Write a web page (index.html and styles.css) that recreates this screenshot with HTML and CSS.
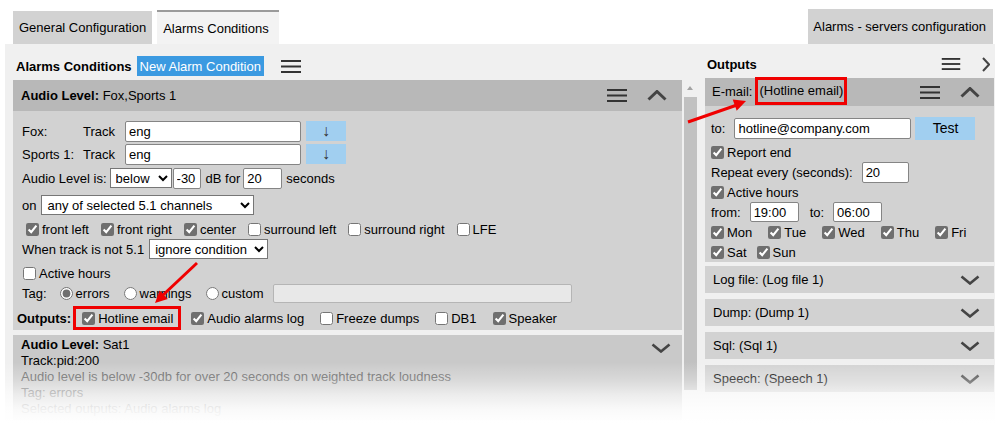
FILE: index.html
```html
<!DOCTYPE html>
<html lang="en">
<head>
  <meta charset="UTF-8">
  <title>Alarms Conditions</title>
  <link rel="stylesheet" href="styles.css">
</head>
<body>
  <div class="page">

    <!-- Tabs -->
    <div class="tabs">
      <div class="tab">General Configuration</div>
      <div class="tab active">Alarms Conditions</div>
      <div class="tab tab-right">Alarms - servers configuration</div>
    </div>

    <div class="panel">

      <!-- Alarms conditions column -->
      <div class="conditions">
        <div class="pane-head">
          <b>Alarms Conditions</b>
          <button class="new-btn">New Alarm Condition</button>
          <svg class="icon-menu" viewBox="0 0 20 13"><rect y="0" width="20" height="2"/><rect y="5.5" width="20" height="2"/><rect y="11" width="20" height="2"/></svg>
        </div>

        <div class="scroll">
          <div class="list">
            <div class="box">
              <div class="box-head">
                <span><b>Audio Level:</b> Fox,Sports 1</span>
                <span class="head-icons">
                  <svg class="icon-menu" viewBox="0 0 20 13"><rect y="0" width="20" height="2"/><rect y="5.5" width="20" height="2"/><rect y="11" width="20" height="2"/></svg>
                  <svg class="icon-up" viewBox="0 0 20 11"><polyline points="1.5,9.5 10,1.5 18.5,9.5"/></svg>
                </span>
              </div>
              <div class="box-body">
                <div class="row mb3">
                  <span class="src">Fox:</span>
                  <span class="trk">Track</span>
                  <input class="in-track" type="text" value="eng">
                  <button class="down-btn">↓</button>
                </div>
                <div class="row mb4">
                  <span class="src">Sports 1:</span>
                  <span class="trk">Track</span>
                  <input class="in-track" type="text" value="eng">
                  <button class="down-btn">↓</button>
                </div>
                <div class="row mb7">
                  <span>Audio Level is:</span>
                  <select class="sel-below"><option>below</option></select>
                  <input class="in-db" type="text" value="-30">
                  <span class="ml5">dB for</span>
                  <input class="in-sec" type="text" value="20">
                  <span class="ml4">seconds</span>
                </div>
                <div class="row mb4">
                  <span>on</span>
                  <select class="sel-on"><option>any of selected 5.1 channels</option></select>
                </div>
                <div class="row checks">
                  <label class="opt"><input type="checkbox" checked>front left</label>
                  <label class="opt"><input type="checkbox" checked>front right</label>
                  <label class="opt"><input type="checkbox" checked>center</label>
                  <label class="opt"><input type="checkbox">surround left</label>
                  <label class="opt"><input type="checkbox">surround right</label>
                  <label class="opt"><input type="checkbox">LFE</label>
                </div>
                <div class="row mb4">
                  <span>When track is not 5.1</span>
                  <select class="sel-when"><option>ignore condition</option></select>
                </div>
                <div class="row">
                  <label class="opt active-hours"><input type="checkbox">Active hours</label>
                </div>
                <div class="row tags mb3">
                  <span>Tag:</span>
                  <label class="opt"><input type="radio" name="tag" checked>errors</label>
                  <label class="opt"><input type="radio" name="tag">warnings</label>
                  <label class="opt"><input type="radio" name="tag">custom</label>
                  <input class="in-tag" type="text" disabled>
                </div>
                <div class="row outs">
                  <b>Outputs:</b>
                  <label class="opt marked"><input type="checkbox" checked>Hotline email</label>
                  <label class="opt"><input type="checkbox" checked>Audio alarms log</label>
                  <label class="opt"><input type="checkbox">Freeze dumps</label>
                  <label class="opt"><input type="checkbox">DB1</label>
                  <label class="opt"><input type="checkbox" checked>Speaker</label>
                </div>
              </div>
            </div>

            <div class="box closed">
              <div class="summary">
                <div><b>Audio Level:</b> Sat1</div>
                <div>Track:pid:200</div>
                <div class="muted">Audio level is below -30db for over 20 seconds on weighted track loudness</div>
                <div class="muted">Tag: errors</div>
                <div class="muted">Selected outputs: Audio alarms log</div>
              </div>
              <svg class="icon-down" viewBox="0 0 20 10"><polyline points="1.5,1.5 10,8.5 18.5,1.5"/></svg>
            </div>
          </div>

          <div class="scrollbar">
            <div class="sb-up"></div>
            <div class="sb-thumb"></div>
          </div>
        </div>
      </div>

      <!-- Outputs column -->
      <div class="outputs">
        <div class="out-head">
          <b>Outputs</b>
          <svg class="icon-menu" viewBox="0 0 20 13"><rect y="0" width="20" height="2"/><rect y="5.5" width="20" height="2"/><rect y="11" width="20" height="2"/></svg>
          <svg class="icon-right" viewBox="0 0 8 15"><polyline points="1,1 7,7.5 1,14"/></svg>
        </div>

        <div class="sec open">
          <div class="sec-head">
            <span>E-mail:<span class="hl">(Hotline email)</span></span>
            <span class="head-icons">
              <svg class="icon-menu" viewBox="0 0 20 13"><rect y="0" width="20" height="2"/><rect y="5.5" width="20" height="2"/><rect y="11" width="20" height="2"/></svg>
              <svg class="icon-up" viewBox="0 0 20 11"><polyline points="1.5,9.5 10,1.5 18.5,9.5"/></svg>
            </span>
          </div>
          <div class="sec-body">
            <div class="row to-row">
              <span>to:</span>
              <input class="in-mail" type="text" value="hotline@company.com">
              <button class="test-btn">Test</button>
            </div>
            <div class="row">
              <label class="opt"><input type="checkbox" checked>Report end</label>
            </div>
            <div class="row">
              <span>Repeat every (seconds):</span>
              <input class="in-repeat" type="text" value="20">
            </div>
            <div class="row">
              <label class="opt"><input type="checkbox" checked>Active hours</label>
            </div>
            <div class="row">
              <span>from:</span>
              <input class="in-time" type="text" value="19:00">
              <span class="to-lbl">to:</span>
              <input class="in-time in-time2" type="text" value="06:00">
            </div>
            <div class="row days">
              <label class="opt"><input type="checkbox" checked>Mon</label>
              <label class="opt"><input type="checkbox" checked>Tue</label>
              <label class="opt"><input type="checkbox" checked>Wed</label>
              <label class="opt"><input type="checkbox" checked>Thu</label>
              <label class="opt"><input type="checkbox" checked>Fri</label>
            </div>
            <div class="row days days2">
              <label class="opt"><input type="checkbox" checked>Sat</label>
              <label class="opt"><input type="checkbox" checked>Sun</label>
            </div>
          </div>
        </div>

        <div class="sec first">
          <div class="sec-head"><span>Log file: (Log file 1)</span><svg class="icon-down" viewBox="0 0 20 10"><polyline points="1.5,1.5 10,8.5 18.5,1.5"/></svg></div>
        </div>
        <div class="sec">
          <div class="sec-head"><span>Dump: (Dump 1)</span><svg class="icon-down" viewBox="0 0 20 10"><polyline points="1.5,1.5 10,8.5 18.5,1.5"/></svg></div>
        </div>
        <div class="sec">
          <div class="sec-head"><span>Sql: (Sql 1)</span><svg class="icon-down" viewBox="0 0 20 10"><polyline points="1.5,1.5 10,8.5 18.5,1.5"/></svg></div>
        </div>
        <div class="sec">
          <div class="sec-head"><span>Speech: (Speech 1)</span><svg class="icon-down" viewBox="0 0 20 10"><polyline points="1.5,1.5 10,8.5 18.5,1.5"/></svg></div>
        </div>
      </div>
    </div>

    <!-- Fade out at the bottom of the screenshot -->
    <div class="fade"></div>

    <!-- Red pointer arrows -->
    <svg class="arrows" viewBox="0 0 1000 434">
      <line x1="197" y1="263" x2="162" y2="296"/>
      <polygon points="155,303 167.8,299 159.6,290.4"/>
      <line x1="688" y1="122" x2="737" y2="105"/>
      <polygon points="746,101 736.7,110.7 732.7,99.5"/>
    </svg>
  </div>
</body>
</html>
```

FILE: styles.css
```css
* {
  box-sizing: border-box;
}

body {
  margin: 0;
  background: #ffffff;
  font-family: 'Liberation Sans', Arial, sans-serif;
  font-size: 13px;
  color: #000;
}

.page {
  position: relative;
  width: 1000px;
  height: 434px;
  overflow: hidden;
}

input, select, button {
  font-family: 'Liberation Sans', Arial, sans-serif;
  font-size: 13px;
  color: #000;
}

input[type="checkbox"],
input[type="radio"] {
  width: 13px;
  height: 13px;
  margin: 0;
  accent-color: #6f6f6f;
}

input[type="text"] {
  height: 21px;
  padding: 0 3px;
  border: 1px solid #858585;
  border-radius: 2px;
  background: #fff;
}

select {
  height: 20px;
  border: 1px solid #767676;
  border-radius: 0;
  background: #fff;
  padding: 0 1px;
}

/* Tabs */
.tabs {
  display: flex;
  align-items: flex-end;
  gap: 5px;
  height: 44px;
  padding-left: 13px;
}

.tab {
  display: flex;
  align-items: center;
  height: 33px;
  padding: 0 6px;
  background: #d2d2d2;
}

.tab.active {
  height: 34px;
  padding: 0 10px 0 6px;
  background: #f3f3f3;
  border-top: 2px solid #9b9b9b;
}

.tab-right {
  margin-left: auto;
  margin-right: 7px;
  height: 35px;
  padding: 0 7px 0 5px;
}

/* Panel */
.panel {
  display: flex;
  margin: 0 5px;
  height: 390px;
  background: #f0f0f0;
}

.conditions {
  width: 692px;
  padding-left: 8px;
}

.pane-head {
  display: flex;
  align-items: center;
  height: 36px;
  padding: 8px 0 0 3px;
}

.new-btn {
  height: 20px;
  margin-left: 5px;
  padding: 0 3px;
  border: none;
  background: #3b9ae1;
  color: #fff;
}

.pane-head .icon-menu {
  margin-left: 17px;
}

.icon-menu {
  width: 20px;
  height: 13px;
  fill: #333;
}

.icon-up {
  width: 20px;
  height: 11px;
  fill: none;
  stroke: #444;
  stroke-width: 3;
}

.icon-down {
  width: 20px;
  height: 10px;
  fill: none;
  stroke: #444;
  stroke-width: 2.6;
}

.icon-right {
  width: 8px;
  height: 15px;
  fill: none;
  stroke: #444;
  stroke-width: 2;
}

.head-icons {
  display: flex;
  align-items: center;
  gap: 20px;
}

.scroll {
  display: flex;
  gap: 2px;
  height: 310px;
}

.list {
  width: 669px;
}

.scrollbar {
  display: flex;
  flex-direction: column;
  width: 13px;
}

.sb-up {
  height: 17px;
  position: relative;
}

.sb-up::after {
  content: '';
  position: absolute;
  left: 3px;
  top: 6px;
  border-left: 3.5px solid transparent;
  border-right: 3.5px solid transparent;
  border-bottom: 4px solid #a3a3a3;
}

.sb-thumb {
  flex: 1;
  background: #c1c1c1;
}

/* Alarm boxes */
.box {
  background: #d2d2d2;
  margin-bottom: 5px;
}

.box-head {
  display: flex;
  align-items: center;
  justify-content: space-between;
  height: 31px;
  padding: 0 15px 0 8px;
  background: #b8b8b8;
}

.box-body {
  padding: 10px 0 0 9px;
}

.row {
  display: flex;
  align-items: center;
  height: 20px;
}

.mb3 { margin-bottom: 3px; }
.mb4 { margin-bottom: 4px; }
.mb7 { margin-bottom: 7px; }
.ml4 { margin-left: 4px; }
.ml5 { margin-left: 5px; }

.src {
  width: 61px;
}

.trk {
  width: 42px;
}

.in-track {
  width: 176px;
}

.down-btn {
  width: 40px;
  height: 20px;
  margin-left: 5px;
  border: none;
  background: #a1cff0;
  color: #333;
  padding: 0;
  font-size: 16px;
  line-height: 20px;
}

.sel-below {
  width: 62px;
  margin-left: 3px;
}

.in-db {
  width: 28px;
  margin-left: 1px;
}

.in-sec {
  width: 39px;
  margin-left: 3px;
}

.sel-on {
  width: 213px;
  margin-left: 5px;
}

.sel-when {
  width: 119px;
  margin-left: 5px;
}

.opt {
  display: flex;
  align-items: center;
  gap: 3px;
}

.checks {
  gap: 12px;
  padding-left: 4px;
}

.active-hours {
  margin-left: 1px;
}

.tags {
  gap: 14px;
}

.tags > span {
  margin-right: -1px;
}

.in-tag {
  width: 299px;
  height: 19px !important;
  margin-left: -4px;
  background: #e8e8e8 !important;
  border-color: #b5b5b5 !important;
}

.outs {
  height: 24px;
  gap: 16px;
  margin-left: -5px;
}

.outs b {
  margin-right: -14px;
}

.marked {
  height: 24px;
  padding: 0 5px 0 6px;
  border: 3px solid #f00000;
  margin-right: -6px;
}

/* Collapsed alarm */
.closed {
  position: relative;
  background: #c9c9c9;
}

.summary {
  padding: 2px 8px 3px;
  line-height: 16px;
}

.muted {
  color: #5e5e5e;
}

.closed .icon-down {
  position: absolute;
  right: 11px;
  top: 8px;
}

/* Outputs column */
.outputs {
  flex: 1;
  padding: 0 1px 0 8px;
}

.out-head {
  display: flex;
  align-items: center;
  height: 34px;
  padding: 6px 4px 0 2px;
}

.out-head b {
  margin-right: auto;
}

.out-head .icon-menu {
  height: 12px;
  margin-right: 21px;
}

.sec {
  background: #d2d2d2;
  margin-top: 6px;
}

.sec.open {
  margin-top: 0;
}

.sec.first {
  margin-top: 4px;
}

.sec-head {
  display: flex;
  align-items: center;
  justify-content: space-between;
  height: 27px;
  padding: 0 14px 0 8px;
}

.sec.open .sec-head {
  height: 28px;
  padding-left: 7px;
  background: #b8b8b8;
}

.hl {
  display: inline-block;
  margin-left: 3px;
  padding: 3px 1px 4px;
  border: 3px solid #f00000;
  position: relative;
  top: -1px;
}

.sec-body {
  padding: 10px 0 0 6px;
}

.to-row {
  height: 24px;
  margin-bottom: 2px;
}

.in-mail {
  width: 177px;
  margin-left: 9px;
}

.test-btn {
  width: 60px;
  height: 23px;
  margin-left: 4px;
  border: none;
  background: #a1cff0;
  font-size: 14px;
}

.in-repeat {
  width: 47px;
  margin-left: 9px;
}

.in-time {
  width: 49px;
  height: 20px !important;
  margin-left: 9px;
}

.to-lbl {
  margin-left: 11px;
}

.days {
  gap: 16px;
}

.days2 {
  gap: 10px;
}

/* Overlays */
.fade {
  position: absolute;
  left: 0;
  right: 0;
  top: 350px;
  bottom: 0;
  background: linear-gradient(to bottom, rgba(255, 255, 255, 0) 12px, rgba(255, 255, 255, 0.3) 30px, rgba(255, 255, 255, 0.66) 45px, rgba(255, 255, 255, 0.9) 60px, #ffffff 74px);
  pointer-events: none;
}

.arrows {
  position: absolute;
  left: 0;
  top: 0;
  width: 1000px;
  height: 434px;
  pointer-events: none;
}

.arrows line {
  stroke: #f00000;
  stroke-width: 3;
}

.arrows polygon {
  fill: #f00000;
}
```
